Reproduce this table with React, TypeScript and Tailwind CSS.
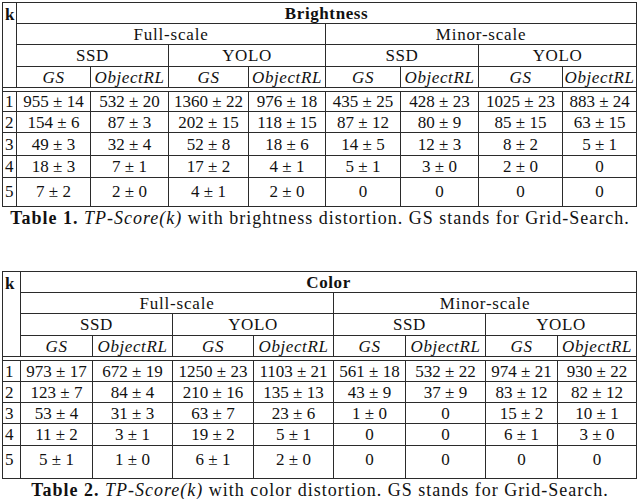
import React from 'react';

type TableSpec = {
  no: number;
  title: string;
  distortion: string;
  widths: number[];
  rowHeights: number[];
  rows: string[][];
};

const line = 'border border-[#2b2b2b]';

const tables: TableSpec[] = [
  {
    no: 1,
    title: 'Brightness',
    distortion: 'brightness',
    widths: [14, 74, 78, 80, 77, 75, 78, 84, 74],
    rowHeights: [20, 21, 23, 22, 29],
    rows: [
      ['955 ± 14', '532 ± 20', '1360 ± 22', '976 ± 18', '435 ± 25', '428 ± 23', '1025 ± 23', '883 ± 24'],
      ['154 ± 6', '87 ± 3', '202 ± 15', '118 ± 15', '87 ± 12', '80 ± 9', '85 ± 15', '63 ± 15'],
      ['49 ± 3', '32 ± 4', '52 ± 8', '18 ± 6', '14 ± 5', '12 ± 3', '8 ± 2', '5 ± 1'],
      ['18 ± 3', '7 ± 1', '17 ± 2', '4 ± 1', '5 ± 1', '3 ± 0', '2 ± 0', '0'],
      ['7 ± 2', '2 ± 0', '4 ± 1', '2 ± 0', '0', '0', '0', '0'],
    ],
  },
  {
    no: 2,
    title: 'Color',
    distortion: 'color',
    widths: [18, 72, 80, 81, 80, 72, 80, 72, 79],
    rowHeights: [21, 21, 21, 22, 33],
    rows: [
      ['973 ± 17', '672 ± 19', '1250 ± 23', '1103 ± 21', '561 ± 18', '532 ± 22', '974 ± 21', '930 ± 22'],
      ['123 ± 7', '84 ± 4', '210 ± 16', '135 ± 13', '43 ± 9', '37 ± 9', '83 ± 12', '82 ± 12'],
      ['53 ± 4', '31 ± 3', '63 ± 7', '23 ± 6', '1 ± 0', '0', '15 ± 2', '10 ± 1'],
      ['11 ± 2', '3 ± 1', '19 ± 2', '5 ± 1', '0', '0', '6 ± 1', '3 ± 0'],
      ['5 ± 1', '1 ± 0', '6 ± 1', '2 ± 0', '0', '0', '0', '0'],
    ],
  },
];

function cn(...parts: (string | false | undefined)[]) {
  return parts.filter(Boolean).join(' ');
}

const ResultTable: React.FC<{ spec: TableSpec }> = ({ spec }) => {
  const last = spec.rows.length - 1;
  return (
    <div className="flex flex-col">
      <table className="table-fixed border-collapse w-[634px] ml-[2px] text-[17px] text-[#111] leading-none">
        <colgroup>
          {spec.widths.map((w, i) => (
            <col key={i} style={{ width: w }} />
          ))}
        </colgroup>
        <thead>
          <tr className="h-[21px]">
            <th rowSpan={4} className={cn(line, 'align-top text-left pl-[2px] pt-[3px] font-bold')}>k</th>
            <th colSpan={8} className={cn(line, 'font-bold text-center tracking-[0.6px]')}>{spec.title}</th>
          </tr>
          <tr className="h-[21px]">
            <th colSpan={4} className={cn(line, 'font-normal tracking-[0.8px]')}>Full-scale</th>
            <th colSpan={4} className={cn(line, 'font-normal tracking-[0.8px]')}>Minor-scale</th>
          </tr>
          <tr className="h-[22px]">
            {['SSD', 'YOLO', 'SSD', 'YOLO'].map((m, i) => (
              <th key={i} colSpan={2} className={cn(line, 'font-normal tracking-[0.6px]')}>{m}</th>
            ))}
          </tr>
          <tr className="h-[21px]">
            {[0, 1, 2, 3].map((i) => (
              <React.Fragment key={i}>
                <th className={cn(line, 'font-normal italic tracking-[0.6px]')}>GS</th>
                <th className={cn(line, 'font-normal italic tracking-[0.6px]')}>ObjectRL</th>
              </React.Fragment>
            ))}
          </tr>
          {/* gap of the doubled rule */}
          <tr className="h-[4px]">
            <th colSpan={9} className={cn(line, 'p-0 text-[0px] leading-none')} />
          </tr>
        </thead>
        <tbody>
          {spec.rows.map((row, r) => (
            <tr key={r} style={{ height: spec.rowHeights[r] }}>
              <td className={cn(line, 'pl-[2px] text-left', r === last ? 'align-top pt-[5px]' : 'align-middle')}>{r + 1}</td>
              {row.map((v, c) => (
                <td
                  key={c}
                  className={cn(line, 'text-center whitespace-nowrap', r === last ? 'align-top pt-[5px]' : 'align-middle')}
                >
                  {v}
                </td>
              ))}
            </tr>
          ))}
        </tbody>
      </table>
      <p className="mt-[3px] text-center text-[18px] leading-[17px] tracking-[1px] text-[#111] whitespace-nowrap">
        <span className="font-bold">Table {spec.no}.</span> <span className="italic">TP-Score(k)</span> with{' '}
        {spec.distortion} distortion. GS stands for Grid-Search.
      </p>
    </div>
  );
};

export default function App() {
  return (
    <div className="w-[640px] h-[499px] bg-white overflow-hidden pt-[2px] font-[family-name:Liberation_Serif]">
      <ResultTable spec={tables[0]} />
      <div className="h-[44px]" />
      <ResultTable spec={tables[1]} />
    </div>
  );
}
